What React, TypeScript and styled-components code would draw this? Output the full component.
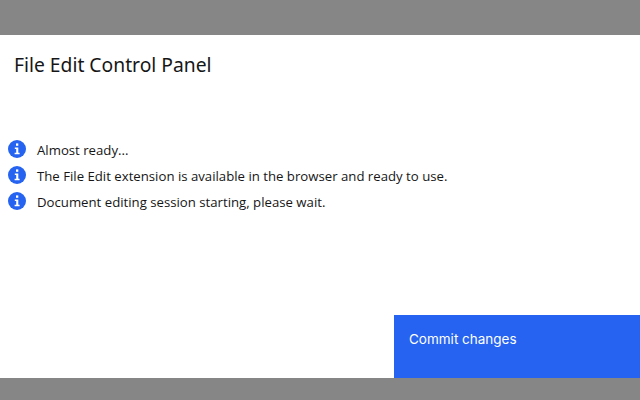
import React from 'react';
import styled, { createGlobalStyle } from 'styled-components';

const GlobalStyle = createGlobalStyle`
  html, body {
    margin: 0;
    padding: 0;
    background: #868686;
  }
`;

const Page = styled.div`
  width: 640px;
  height: 400px;
  display: flex;
  flex-direction: column;
  padding: 35px 0 22px;
  box-sizing: border-box;
  background: #868686;
  overflow: hidden;
`;
const Panel = styled.main`
  flex: 1;
  display: flex;
  flex-direction: column;
  background: #ffffff;
`;
const Title = styled.h1`
  margin: 0;
  padding: 17px 0 0 14px;
  font-family: 'Noto Sans', sans-serif;
  font-weight: 400;
  font-size: 19.3px;
  line-height: 26px;
  color: #161616;
`;
const Messages = styled.ul`
  list-style: none;
  margin: 0;
  padding: 60px 0 0 8px;
  display: grid;
`;
const Message = styled.li`
  display: grid;
  grid-template-columns: 18px auto;
  column-gap: 11px;
  height: 26px;
  font-family: 'Open Sans', sans-serif;
  font-size: 13.2px;
  line-height: 26px;
  color: #161616;
`;
const IconWrap = styled.span`
  display: block;
  width: 18px;
  height: 18px;
  margin-top: 2px;
`;
const MessageText = styled.span`
  display: block;
  margin-top: -1px;
`;
const CommitButton = styled.button`
  margin-top: auto;
  align-self: flex-end;
  width: 246px;
  height: 63px;
  padding: 14px 15px 0;
  border: 0;
  border-radius: 0;
  background: #2563f0;
  color: #ffffff;
  text-align: left;
  display: flex;
  align-items: flex-start;
  font-family: 'Inter', sans-serif;
  font-size: 13.5px;
  line-height: 20px;
`;

const InfoIcon: React.FC = () => (
  <IconWrap>
    <svg width="18" height="18" viewBox="0 0 18 18">
      <circle cx="9" cy="9" r="9" fill="#2563f0" />
      <rect x="8" y="3.4" width="2.3" height="2.4" fill="#fff" />
      <path d="M6.8 7.4h3.5v5.3h1.3v1.5H6.6v-1.5h1.6V8.9H6.8z" fill="#fff" />
    </svg>
  </IconWrap>
);

const messages = [
  'Almost ready...',
  'The File Edit extension is available in the browser and ready to use.',
  'Document editing session starting, please wait.',
];

const App: React.FC = () => (
  <Page>
    <GlobalStyle />
    <Panel>
      <Title>File Edit Control Panel</Title>
      <Messages>
        {messages.map((text) => (
          <Message key={text}>
            <InfoIcon />
            <MessageText>{text}</MessageText>
          </Message>
        ))}
      </Messages>
      <CommitButton>Commit changes</CommitButton>
    </Panel>
  </Page>
);

export default App;
